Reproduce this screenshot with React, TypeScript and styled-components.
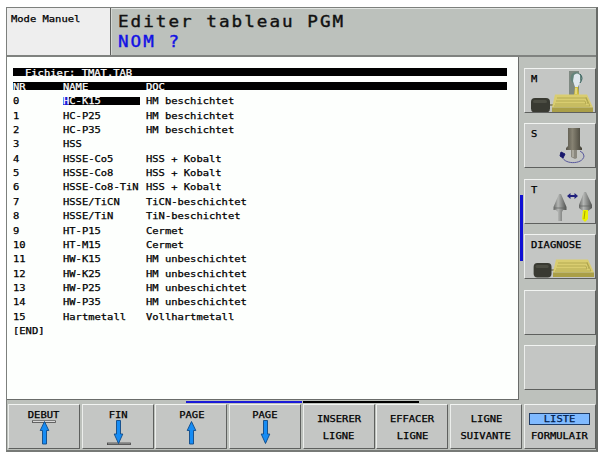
import React from "react";
import styled, { createGlobalStyle } from "styled-components";

interface ITool {
  nr: string;
  name: string;
  doc: string;
}

const tools: ITool[] = [
  { nr: "0", name: "HC-K15", doc: "HM beschichtet" },
  { nr: "1", name: "HC-P25", doc: "HM beschichtet" },
  { nr: "2", name: "HC-P35", doc: "HM beschichtet" },
  { nr: "3", name: "HSS", doc: "" },
  { nr: "4", name: "HSSE-Co5", doc: "HSS + Kobalt" },
  { nr: "5", name: "HSSE-Co8", doc: "HSS + Kobalt" },
  { nr: "6", name: "HSSE-Co8-TiN", doc: "HSS + Kobalt" },
  { nr: "7", name: "HSSE/TiCN", doc: "TiCN-beschichtet" },
  { nr: "8", name: "HSSE/TiN", doc: "TiN-beschichtet" },
  { nr: "9", name: "HT-P15", doc: "Cermet" },
  { nr: "10", name: "HT-M15", doc: "Cermet" },
  { nr: "11", name: "HW-K15", doc: "HM unbeschichtet" },
  { nr: "12", name: "HW-K25", doc: "HM unbeschichtet" },
  { nr: "13", name: "HW-P25", doc: "HM unbeschichtet" },
  { nr: "14", name: "HW-P35", doc: "HM unbeschichtet" },
  { nr: "15", name: "Hartmetall", doc: "Vollhartmetall" },
  { nr: "[END]", name: "", doc: "" },
];

const GlobalStyle = createGlobalStyle`
  * {
    box-sizing: border-box;
  }
  body {
    margin: 0;
    background: #fff;
    font-family: "DejaVu Sans Mono", monospace;
  }
`;

const Screen = styled.div`
  width: 592px;
  height: 445px;
  margin: 7px 0 0 6px;
  display: flex;
  flex-direction: column;
  border: 1px solid #7d807d;
  border-right: 2px solid #686b68;
  border-bottom: 2px solid #777a77;
  background: #bdc1bc;
`;

const Header = styled.header`
  display: flex;
  flex: none;
  height: 49px;
  border-bottom: 2px solid #7f827f;
`;
const ModeBox = styled.div`
  width: 104px;
  padding: 5px 0 0 4px;
  border-right: 1px solid #5c5e5c;
  background: #eeeeee;
`;
const TitleBox = styled.div`
  flex: 1;
  padding: 3px 0 0 6px;
  border-top: 1px solid #e2e5e2;
  border-left: 1px solid #d5d8d4;
  background: #bcc1bc;
`;

/* the control's character set is wider than it is tall */
const Text = styled.span<{ $weight?: number; $center?: boolean }>`
  display: block;
  width: max-content;
  font-size: 9px;
  line-height: 12px;
  white-space: pre;
  transform: scaleX(1.163);
  transform-origin: ${(p) => (p.$center ? "center" : "left")};
  -webkit-text-stroke: ${(p) => p.$weight ?? 0.25}px currentColor;
`;
const Title = styled(Text)<{ $color: string }>`
  color: ${(p) => p.$color};
  font-size: 16px;
  line-height: 20px;
  letter-spacing: 1.84px;
  transform: scaleX(1.1);
`;

const Body = styled.div`
  display: flex;
  height: 343px;
`;
const TablePane = styled.main`
  width: 513px;
  padding: 11px 0 0 6px;
  border-right: 1px solid #6a6c6a;
  border-bottom: 1px solid #6a6c6a;
  background: #fdfffd;
`;
const Bar = styled.div<{ $first?: boolean }>`
  display: grid;
  grid-template-columns: ${(p) => (p.$first ? "1fr" : "50px 83px 1fr")};
  width: 494px;
  height: 8px;
  margin-bottom: 6px;
  padding-left: ${(p) => (p.$first ? "12px" : "0")};
  background: #000;
  color: #fff;
  ${Text} {
    line-height: 10px;
  }
`;
const Row = styled.div`
  display: grid;
  grid-template-columns: 50px 83px 1fr;
  align-items: center;
  height: 14.39px;
`;
const Field = styled.div`
  width: 77px;
  height: 8px;
  background: linear-gradient(to right, #1a1ad8 6px, #000 6px);
  color: #fff;
  ${Text} {
    line-height: 9px;
  }
`;
const Rows = styled.div`
  margin-top: -2px;
`;

const SideBar = styled.aside`
  display: flex;
  flex: 1;
`;
const SideMarker = styled.div`
  width: 3px;
  height: 66px;
  margin: 138px 1px 0 1px;
  background: #1010d4;
`;
const SideKeys = styled.div`
  display: flex;
  flex-direction: column;
  gap: 10.4px;
  padding-top: 11px;
`;

const Key = styled.div`
  display: grid;
  width: 72px;
  height: 45px;
  border-top: 1px solid #f2f4f2;
  border-left: 1px solid #eceeec;
  border-right: 1px solid #5e605e;
  border-bottom: 1px solid #5e605e;
  background: #c4c6c4;
  > * {
    grid-area: 1 / 1;
  }
`;
const SideLabel = styled(Text)`
  margin: 4px 0 0 6px;
`;
const KeyArt = styled.svg`
  display: block;
  width: 70px;
  height: 43px;
`;

const Footer = styled.footer`
  flex: 1;
  padding-left: 1px;
`;
const PageMarks = styled.div`
  display: flex;
  gap: 1px;
  padding: 1px 0 1px 178px;
`;
const PageMark = styled.div<{ $color: string }>`
  width: 116px;
  height: 2px;
  background: ${(p) => p.$color};
`;
const SoftKeys = styled.div`
  display: flex;
  gap: 1.7px;
`;
const KeyLines = styled.div<{ $top: number }>`
  display: flex;
  flex-direction: column;
  align-items: center;
  gap: 5px;
  padding-top: ${(p) => p.$top}px;
`;
const Selected = styled.div`
  display: flex;
  align-items: center;
  justify-content: center;
  width: 61px;
  height: 12px;
  border: 1px solid #1f3c66;
  background: #80baff;
  color: #001c4c;
`;

const Motor = () => (
  <>
    <rect x="22" y="35" width="7" height="2" fill="#8f8d74" />
    <rect x="6" y="29" width="19" height="14.5" rx="4" fill="#393a32" />
    <rect x="8" y="31" width="14" height="3" rx="1.5" fill="#4c4d43" />
  </>
);

const Plate = () => (
  <>
    <path d="M30 25.5H62L68 38.5H27Z" fill="#d9cd70" />
    <path d="M27 38.5H68V43H27Z" fill="#aa9f47" />
    <path
      d="M32 29H61L63 35M31 32H60L61 35H30M29 37H65L61 28"
      fill="none"
      stroke="#9f963f"
      strokeWidth="0.6"
    />
  </>
);

const SpindleArt = () => (
  <KeyArt viewBox="0 0 70 43">
    <rect x="44" y="2" width="10" height="24" fill="#7f8982" />
    <ellipse cx="51" cy="9" rx="5.5" ry="6" fill="#65847c" />
    <path d="M49 6Q52 3 55 6V13L53 18H50L48 12Z" fill="#dfe7ee" />
    <path d="M55 5Q59 9 55 14" fill="none" stroke="#315f5c" />
    <path d="M50 18H53L54 26H49Z" fill="#d3c03c" />
    <path d="M51 19V25" stroke="#f2edbc" />
    <Motor />
    <Plate />
  </KeyArt>
);

const RotationArt = () => (
  <KeyArt viewBox="0 0 70 43">
    <defs>
      <linearGradient id="shank">
        <stop offset="0" stopColor="#57544a" />
        <stop offset="0.4" stopColor="#878373" />
        <stop offset="1" stopColor="#444238" />
      </linearGradient>
    </defs>
    <path
      d="M37 31C37 41 58 41 59 32Q59 29 55 27"
      fill="none"
      stroke="#57579c"
    />
    <path d="M43 4H55V22L57 24V26H41V24L43 22Z" fill="url(#shank)" />
    <path d="M46 26H52V34L50 35L46 33Z" fill="#8b8980" />
    <path d="M48 26V33" stroke="#c8c6bb" />
    <path d="M36 28L40 30L38 34L35 32Z" fill="#18186c" stroke="#18186c" />
  </KeyArt>
);

const ToolChangeArt = () => (
  <KeyArt viewBox="0 0 70 43">
    <defs>
      <linearGradient id="cone">
        <stop offset="0" stopColor="#686a68" />
        <stop offset="0.35" stopColor="#b4b6b4" />
        <stop offset="1" stopColor="#505250" />
      </linearGradient>
    </defs>
    <path d="M34 14H36L41.5 27V30H38L37 32V41H33V32L31 30H28.5V27Z" fill="url(#cone)" />
    <path d="M59 12H61L67 25V28L63 31H58L54 28V25Z" fill="url(#cone)" />
    <path d="M29 28H41M54 26H67" stroke="#606260" strokeWidth="0.7" />
    <path d="M58 30H63V39L60 42L57 39Z" fill="#eaf000" />
    <path d="M60 31L59 39" stroke="#a7a300" />
    <path
      d="M42 16L45.5 13V15H49.5V13L53 16L49.5 19V17H45.5V19Z"
      fill="#20207c"
    />
  </KeyArt>
);

const DiagnoseArt = () => (
  <KeyArt viewBox="0 0 70 43">
    <g transform="translate(3 -1) scale(.94 1)">
      <Motor />
    </g>
    <g transform="translate(1 -1)">
      <Plate />
    </g>
  </KeyArt>
);

const ArrowArt = ({ up, line }: { up?: boolean; line?: number }) => (
  <KeyArt viewBox="0 0 70 43">
    {line && (
      <rect
        x={line < 25 ? 23.5 : 24.5}
        y={line}
        width="23"
        height="1.6"
        fill={line < 25 ? "#fff" : "#a9aaa9"}
        stroke="#444"
        strokeWidth="0.8"
      />
    )}
    <path
      d={
        up
          ? "M35.5 16.5L39.8 25.5H37.5V39H33.5V25.5H31.2Z"
          : "M33.5 15.5H37.5V29H39.8L35.5 38.5L31.2 29H33.5Z"
      }
      fill="#168cf4"
      stroke="#104a86"
      strokeWidth="0.9"
    />
  </KeyArt>
);

const arrowKeys = [
  { label: "DEBUT", up: true, line: 15.8 },
  { label: "FIN", up: false, line: 38 },
  { label: "PAGE", up: true },
  { label: "PAGE", up: false },
];
const textKeys = [
  ["INSERER", "LIGNE"],
  ["EFFACER", "LIGNE"],
  ["LIGNE", "SUIVANTE"],
];

const App = () => {
  return (
    <>
      <GlobalStyle />
      <Screen>
        <Header>
          <ModeBox>
            <Text>Mode Manuel</Text>
          </ModeBox>
          <TitleBox>
            <Title $color="#111" $weight={0.4}>
              Editer tableau PGM
            </Title>
            <Title $color="#1212e4" $weight={0.4}>
              NOM ?
            </Title>
          </TitleBox>
        </Header>

        <Body>
          <TablePane>
            <Bar $first>
              <Text>Fichier: TMAT.TAB</Text>
            </Bar>
            <Bar>
              <Text>NR</Text>
              <Text>NAME</Text>
              <Text>DOC</Text>
            </Bar>
            <Rows>
              {tools.map(({ nr, name, doc }, i) => (
                <Row key={nr}>
                  <Text>{nr}</Text>
                  {i === 0 ? (
                    <Field>
                      <Text>{name}</Text>
                    </Field>
                  ) : (
                    <Text>{name}</Text>
                  )}
                  <Text>{doc}</Text>
                </Row>
              ))}
            </Rows>
          </TablePane>

          <SideBar>
            <SideMarker />
            <SideKeys>
              <Key>
                <SpindleArt />
                <SideLabel>M</SideLabel>
              </Key>
              <Key>
                <RotationArt />
                <SideLabel>S</SideLabel>
              </Key>
              <Key>
                <ToolChangeArt />
                <SideLabel>T</SideLabel>
              </Key>
              <Key>
                <DiagnoseArt />
                <SideLabel>DIAGNOSE</SideLabel>
              </Key>
              <Key />
              <Key />
            </SideKeys>
          </SideBar>
        </Body>

        <Footer>
          <PageMarks>
            <PageMark $color="#1a1ad8" />
            <PageMark $color="#000" />
          </PageMarks>
          <SoftKeys>
            {arrowKeys.map(({ label, up, line }, i) => (
              <Key key={i}>
                <ArrowArt up={up} line={line} />
                <KeyLines $top={4}>
                  <Text $center>{label}</Text>
                </KeyLines>
              </Key>
            ))}
            {textKeys.map(([top, bottom]) => (
              <Key key={top}>
                <KeyLines $top={8}>
                  <Text $center>{top}</Text>
                  <Text $center>{bottom}</Text>
                </KeyLines>
              </Key>
            ))}
            <Key>
              <KeyLines $top={8}>
                <Selected>
                  <Text $center>LISTE</Text>
                </Selected>
                <Text $center>FORMULAIR</Text>
              </KeyLines>
            </Key>
          </SoftKeys>
        </Footer>
      </Screen>
    </>
  );
};

export default App;
